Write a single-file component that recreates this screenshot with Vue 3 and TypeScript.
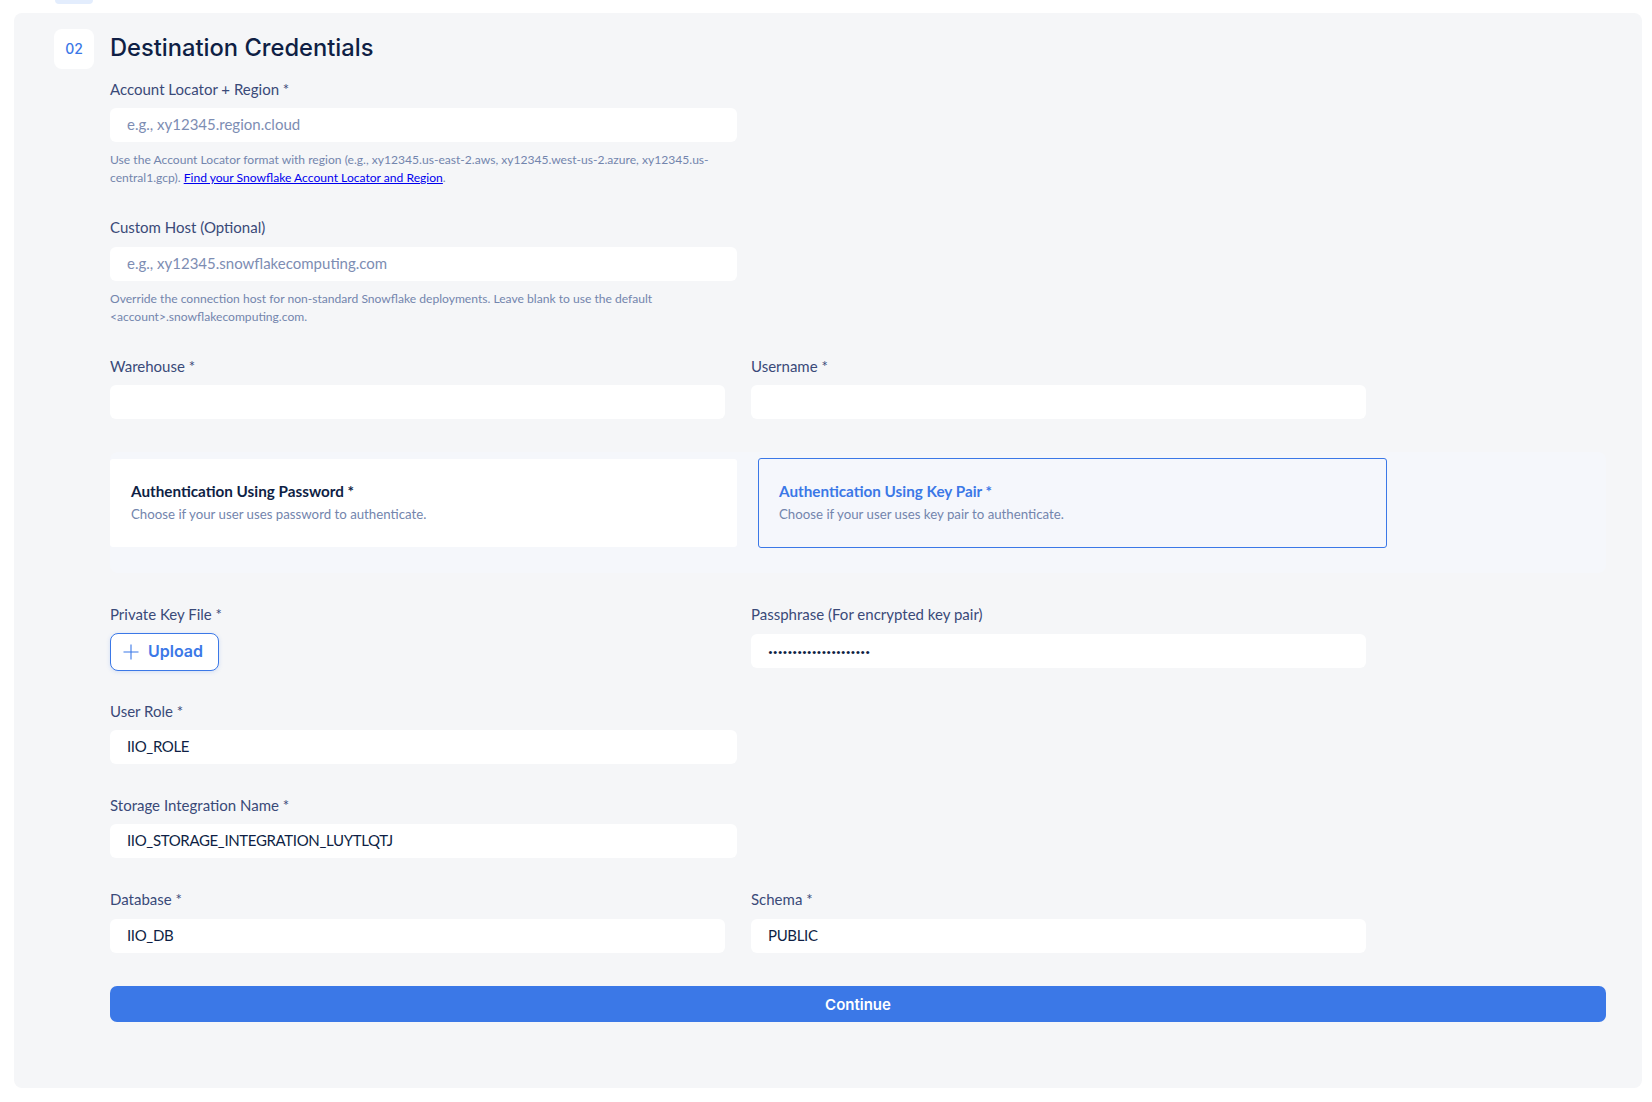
<script setup lang="ts">
const password = 'x'.repeat(21)
</script>

<template>
  <div class="page">
    <div class="prev-step"></div>
    <section class="panel">
      <div class="step-head">
        <div class="step-num">02</div>
        <h2>Destination Credentials</h2>
      </div>

      <div class="form">
        <div class="field wide locator">
          <label>Account Locator + Region *</label>
          <input type="text" placeholder="e.g., xy12345.region.cloud" />
          <p class="hint">
            Use the Account Locator format with region (e.g., xy12345.us-east-2.aws, xy12345.west-us-2.azure, xy12345.us-central1.gcp).
            <a href="#">Find your Snowflake Account Locator and Region</a>.
          </p>
        </div>

        <div class="field wide host">
          <label>Custom Host (Optional)</label>
          <input type="text" placeholder="e.g., xy12345.snowflakecomputing.com" />
          <p class="hint">
            Override the connection host for non-standard Snowflake deployments. Leave blank to use the default
            &lt;account&gt;.snowflakecomputing.com.
          </p>
        </div>

        <div class="row warehouse">
          <div class="field">
            <label>Warehouse *</label>
            <input type="text" />
          </div>
          <div class="field">
            <label>Username *</label>
            <input type="text" />
          </div>
        </div>

        <div class="auth">
          <div class="auth-card">
            <div class="auth-title">Authentication Using Password *</div>
            <div class="auth-sub">Choose if your user uses password to authenticate.</div>
          </div>
          <div class="auth-card selected">
            <div class="auth-title">Authentication Using Key Pair *</div>
            <div class="auth-sub">Choose if your user uses key pair to authenticate.</div>
          </div>
        </div>

        <div class="row keys">
          <div class="field">
            <label>Private Key File *</label>
            <button class="upload" type="button">
              <svg width="16" height="16" viewBox="0 0 16 16" fill="none">
                <path d="M8 .5v15M.5 8h15" stroke="#3b78e7" stroke-width="1.1" />
              </svg>
              <span>Upload</span>
            </button>
          </div>
          <div class="field">
            <label>Passphrase (For encrypted key pair)</label>
            <input class="secret" type="password" :value="password" />
          </div>
        </div>

        <div class="field wide role">
          <label>User Role *</label>
          <input type="text" value="IIO_ROLE" />
        </div>

        <div class="field wide storage">
          <label>Storage Integration Name *</label>
          <input type="text" value="IIO_STORAGE_INTEGRATION_LUYTLQTJ" />
        </div>

        <div class="row database">
          <div class="field">
            <label>Database *</label>
            <input type="text" value="IIO_DB" />
          </div>
          <div class="field">
            <label>Schema *</label>
            <input type="text" value="PUBLIC" />
          </div>
        </div>

        <button class="continue" type="button">Continue</button>
      </div>
    </section>
  </div>
</template>

<style>
html, body {
  margin: 0;
  background: #fff;
}
</style>

<style scoped>
.page {
  height: 1102px;
  box-sizing: border-box;
  font-family: "Lato", "Liberation Sans", sans-serif;
  color: #3a4a78;
  overflow: hidden;
}

.prev-step {
  width: 38px;
  height: 4px;
  margin-left: 55px;
  background: #e3edfd;
  border-radius: 0 0 8px 8px;
}

.panel {
  box-sizing: border-box;
  width: 1628px;
  height: 1075px;
  margin: 9px 0 0 14px;
  padding: 16px 36px 0 40px;
  background: #f5f6f8;
  border-radius: 8px;
}

.step-head {
  display: flex;
  align-items: center;
  gap: 16px;
  height: 40px;
}

.step-num {
  box-sizing: border-box;
  width: 40px;
  height: 40px;
  padding-bottom: 1px;
  border-radius: 8px;
  background: #fff;
  color: #3b78e7;
  font-family: "Inter", sans-serif;
  font-size: 14px;
  font-weight: 500;
  display: flex;
  align-items: center;
  justify-content: center;
}

h2 {
  margin: -4px 0 0;
  font-family: "Inter", sans-serif;
  font-size: 23.7px;
  font-weight: 500;
  color: #0f1f45;
}

.form {
  margin-left: 56px;
  display: flex;
  flex-direction: column;
}

.field {
  display: flex;
  flex-direction: column;
  align-items: flex-start;
}

.field label {
  height: 24px;
  line-height: 22px;
  font-size: 15px;
  margin-bottom: 7px;
}

.locator label,
.warehouse label {
  line-height: 24px;
}

.wide {
  width: 627px;
}

input {
  box-sizing: border-box;
  width: 100%;
  height: 34px;
  border: 0;
  outline: 0;
  padding: 0 17px 2px;
  border-radius: 6px;
  background: #fff;
  font-family: inherit;
  font-size: 15px;
  letter-spacing: -0.35px;
  color: #0f1f45;
}

input::placeholder {
  color: #7d8db3;
  letter-spacing: 0;
  opacity: 1;
}

.secret {
  padding-top: 1px;
  padding-bottom: 0;
  font-size: 8.4px;
  letter-spacing: 0;
}

.hint {
  margin: 9px 0 0;
  font-size: 12.1px;
  line-height: 18px;
  color: #7385ad;
}

.hint a {
  color: #0000ee;
  text-decoration: underline;
}

.locator { margin-top: 8px; }
.host { margin-top: 29px; }
.warehouse { margin-top: 28px; }

.role label,
.storage label {
  margin-bottom: 6px;
}

.row {
  display: grid;
  grid-template-columns: 615px 615px;
  column-gap: 26px;
}

.auth {
  box-sizing: border-box;
  width: 1496px;
  height: 121px;
  margin-top: 33px;
  padding-top: 7px;
  background: #f5f7fb;
  border-radius: 8px;
  display: grid;
  grid-template-columns: 627px 629px;
  column-gap: 21px;
  align-items: start;
}

.auth-card {
  box-sizing: border-box;
  height: 88px;
  padding: 21px 21px 0;
  background: #fff;
  border-radius: 3px;
}

.auth-card.selected {
  height: 90px;
  margin-top: -1px;
  padding: 21px 20px 0;
  background: #f5f7fc;
  border: 1px solid #3b78e7;
}

.auth-title {
  font-size: 15.25px;
  font-weight: 700;
  line-height: 22px;
  color: #0f1f45;
}

.selected .auth-title {
  color: #3b78e7;
}

.auth-sub {
  margin-top: 1px;
  font-size: 13.25px;
  line-height: 22px;
  color: #7385ad;
}

.keys { margin-top: 30px; }
.role { margin-top: 29px; }
.storage { margin-top: 30px; }
.database { margin-top: 30px; }

.upload {
  box-sizing: border-box;
  display: flex;
  align-items: center;
  gap: 9px;
  width: 109px;
  height: 38px;
  margin-top: -1px;
  padding: 0 0 0 12px;
  border: 1px solid #3b78e7;
  border-radius: 8px;
  background: #fff;
  box-shadow: 0 1px 4px rgba(59, 120, 231, 0.18);
  color: #3b78e7;
  font-family: "Inter", sans-serif;
  font-size: 16px;
  font-weight: 600;
}

.upload span {
  margin-bottom: 2px;
}

.continue {
  width: 1496px;
  height: 36px;
  margin-top: 33px;
  padding-bottom: 1px;
  border: 0;
  border-radius: 7px;
  background: #3b78e7;
  color: #fff;
  font-family: "Inter", sans-serif;
  font-size: 15px;
  font-weight: 600;
}
</style>
